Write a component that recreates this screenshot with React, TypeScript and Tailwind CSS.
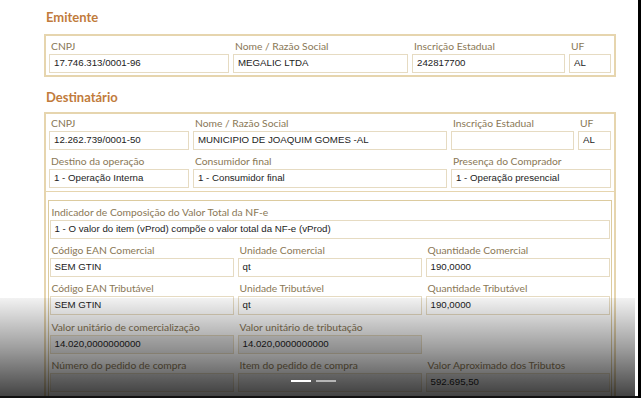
import React from "react";

// campos da NF-e (visual de formulário bege)
type FieldProps = {
  label: string;
  value?: string;
  lh?: string;
  disabled?: boolean;
  className?: string;
};

const Field = ({ label, value = "", lh = "h-[19px]", disabled = false, className = "" }: FieldProps) => (
  <div className={`flex flex-col min-w-0 ${className}`}>
    <div className={`${lh} flex items-end pb-[3px] pl-[2px] text-[10.3px] leading-none text-[#8a7856] font-['Lato',sans-serif] whitespace-nowrap`}>
      {label}
    </div>
    <div
      className={`h-[19px] border-[1.5px] border-[#e6dbc2] flex items-center pl-[4px] text-[9.7px] text-[#1c1c1c] font-['Liberation_Sans',Arial,sans-serif] whitespace-nowrap overflow-hidden ${
        disabled ? "bg-[#ececec]" : "bg-white"
      }`}
    >
      {value}
    </div>
  </div>
);

const Heading = ({ children, className = "" }: { children: React.ReactNode; className?: string }) => (
  <h2 className={`h-[16px] leading-[16px] ml-[2px] text-[13px] font-bold text-[#c17b3c] font-['Lato',sans-serif] ${className}`}>
    {children}
  </h2>
);

export default function App() {
  return (
    <div className="w-[641px] h-[398px] flex bg-white overflow-hidden">
      <div className="relative w-[638px] h-[398px] overflow-hidden">
        <main className="pl-[44px] pt-[9px] w-[616px] box-content">
          {/* Emitente */}
          <Heading className="mb-[9px]">Emitente</Heading>
          <section className="w-[572px] border-2 border-[#e6d5ae] pl-[3px] pr-[2px] pb-[2px]">
            <div className="grid grid-cols-[180px_175px_153px_42px] gap-x-[4px]">
              <Field lh="h-[18px]" label="CNPJ" value="17.746.313/0001-96" />
              <Field lh="h-[18px]" label="Nome / Razão Social" value="MEGALIC LTDA" />
              <Field lh="h-[18px]" label="Inscrição Estadual" value="242817700" />
              <Field lh="h-[18px]" label="UF" value="AL" />
            </div>
          </section>

          {/* Destinatário */}
          <Heading className="mt-[12px] mb-[7px]">Destinatário</Heading>
          <section className="w-[572px] border-x-2 border-t-2 border-[#e6d5ae] h-[300px]">
            <div className="pl-[3px] pr-[2px] pb-[3px] border-b-[1.5px] border-[#e6d5ae]">
              <div className="grid grid-cols-[140px_254px_123px_33px] gap-x-[4px]">
                <Field lh="h-[17px]" label="CNPJ" value="12.262.739/0001-50" />
                <Field lh="h-[17px]" label="Nome / Razão Social" value="MUNICIPIO DE JOAQUIM GOMES -AL" />
                <Field lh="h-[17px]" label="Inscrição Estadual" value="" />
                <Field lh="h-[17px]" label="UF" value="AL" />
                <Field label="Destino da operação" value="1 - Operação Interna" />
                <Field label="Consumidor final" value="1 - Consumidor final" />
                <Field className="col-span-2" label="Presença do Comprador" value="1 - Operação presencial" />
              </div>
            </div>

            {/* produto */}
            <div className="mt-[8px] ml-[2px] w-[564px] border-[1.5px] border-[#dccb9f] pl-[0.5px] pr-[1.5px] pb-[4px]">
              <Field
                label="Indicador de Composição do Valor Total da NF-e"
                value="1 - O valor do item (vProd) compõe o valor total da NF-e (vProd)"
              />
              <div className="grid grid-cols-3 gap-x-[4px]">
                <Field label="Código EAN Comercial" value="SEM GTIN" />
                <Field label="Unidade Comercial" value="qt" />
                <Field label="Quantidade Comercial" value="190,0000" />
                <Field label="Código EAN Tributável" value="SEM GTIN" />
                <Field label="Unidade Tributável" value="qt" />
                <Field label="Quantidade Tributável" value="190,0000" />
                <Field lh="h-[20px]" disabled label="Valor unitário de comercialização" value="14.020,0000000000" />
                <Field lh="h-[20px]" disabled label="Valor unitário de tributação" value="14.020,0000000000" />
                <div />
                <Field disabled label="Número do pedido de compra" value="" />
                <Field disabled label="Item do pedido de compra" value="" />
                <Field disabled label="Valor Aproximado dos Tributos" value="592.695,50" />
              </div>
            </div>
          </section>
        </main>

        {/* sombra do player por cima */}
        <div className="absolute left-0 right-[3px] top-[298px] h-[100px] bg-gradient-to-b from-[rgba(0,0,0,0.05)] via-[rgba(0,0,0,0.38)] to-[rgba(0,0,0,0.75)]" />
        <div className="absolute left-[291px] top-[380px] flex gap-[5px]">
          <span className="block w-[20px] h-[2px] bg-white" />
          <span className="block w-[20px] h-[2px] bg-[#b5b5b5]" />
        </div>
        <div className="absolute left-0 right-0 bottom-0 h-[2px] bg-[#111]" />
      </div>
      <div className="w-[3px] h-[398px] bg-black" />
    </div>
  );
}
